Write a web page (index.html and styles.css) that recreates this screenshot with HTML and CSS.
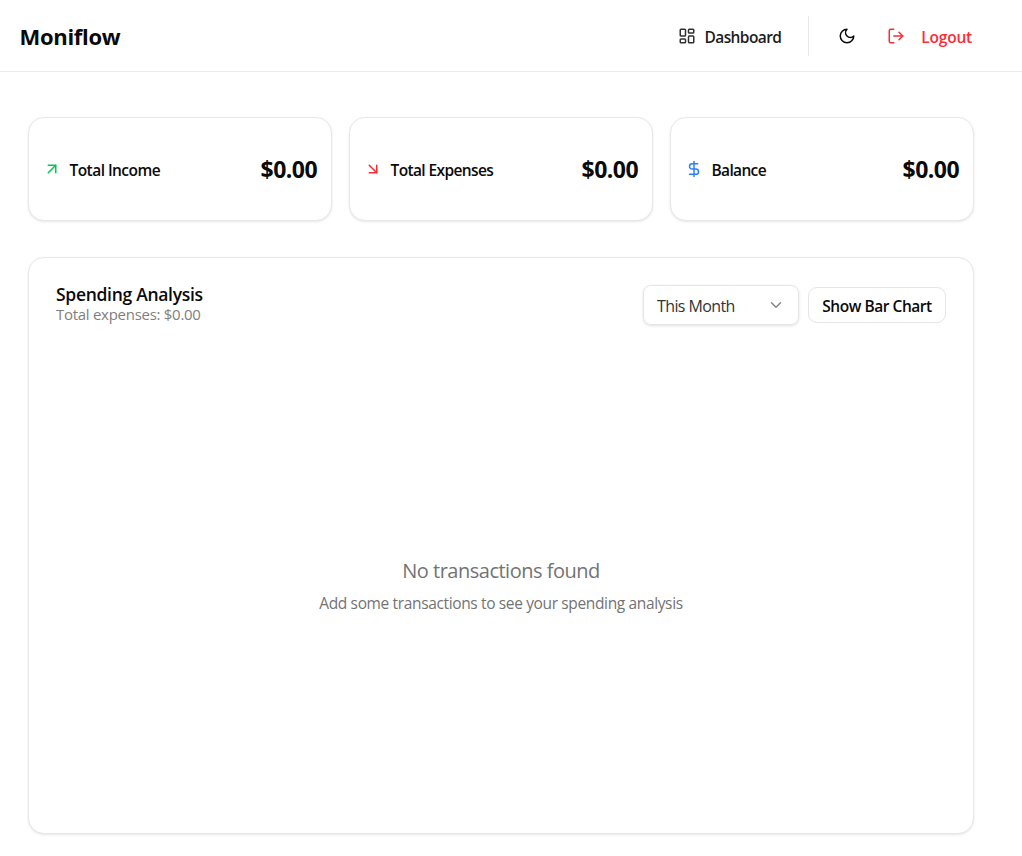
FILE: index.html
```html
<!DOCTYPE html>
<html lang="en">
<head>
<meta charset="utf-8">
<title>Moniflow</title>
<link rel="stylesheet" href="styles.css">
</head>
<body>
<header class="topbar">
  <div class="brand">Moniflow</div>
  <nav class="nav">
    <a class="nav-link">
      <svg class="icon" viewBox="0 0 24 24"><rect width="7" height="9" x="3" y="3" rx="1"/><rect width="7" height="5" x="14" y="3" rx="1"/><rect width="7" height="9" x="14" y="12" rx="1"/><rect width="7" height="5" x="3" y="16" rx="1"/></svg>
      <span class="nav-text">Dashboard</span>
    </a>
    <span class="divider"></span>
    <button class="theme" aria-label="Toggle theme">
      <svg class="icon" viewBox="0 0 24 24"><path d="M12 3a6 6 0 0 0 9 9 9 9 0 1 1-9-9Z"/></svg>
    </button>
    <button class="logout">
      <svg class="icon" viewBox="0 0 24 24"><path d="M9 21H5a2 2 0 0 1-2-2V5a2 2 0 0 1 2-2h4"/><path d="m16 17 5-5-5-5"/><path d="M21 12H9"/></svg>
      <span class="logout-text">Logout</span>
    </button>
  </nav>
</header>
<main class="content">
  <section class="stats">
    <article class="card stat">
      <svg class="icon green" viewBox="0 0 24 24"><path d="M7 7h10v10"/><path d="M7 17 17 7"/></svg>
      <span class="label income">Total Income</span>
      <span class="amount">$0.00</span>
    </article>
    <article class="card stat">
      <svg class="icon red" viewBox="0 0 24 24"><path d="m7 7 10 10"/><path d="M17 7v10H7"/></svg>
      <span class="label expenses">Total Expenses</span>
      <span class="amount">$0.00</span>
    </article>
    <article class="card stat">
      <svg class="icon blue" viewBox="0 0 24 24"><path d="M12 2v20"/><path d="M17 5H9.500a3.500 3.500 0 0 0 0 7h5a3.500 3.500 0 0 1 0 7H6"/></svg>
      <span class="label balance">Balance</span>
      <span class="amount">$0.00</span>
    </article>
  </section>
  <section class="card analysis">
    <div class="analysis-head">
      <div class="titles">
        <h2 class="title">Spending Analysis</h2>
        <p class="subtitle">Total expenses: $0.00</p>
      </div>
      <div class="controls">
        <button class="select"><span class="select-text">This Month</span>
          <svg class="icon chevron" viewBox="0 0 24 24"><path d="m6 9 6 6 6-6"/></svg>
        </button>
        <button class="toggle"><span class="toggle-text">Show Bar Chart</span></button>
      </div>
    </div>
    <div class="empty">
      <p class="empty-title">No transactions found</p>
      <p class="empty-text">Add some transactions to see your spending analysis</p>
    </div>
  </section>
</main>
</body>
</html>
```
FILE: styles.css
```css
* { box-sizing: border-box; margin: 0; padding: 0; }
body {
  width: 1022px;
  height: 856px;
  overflow: hidden;
  background: #fff;
  color: #0a0a0a;
  font-family: "Open Sans", "Noto Sans", sans-serif;
  font-size: 16px;
  line-height: 24px;
}
button { font: inherit; color: inherit; background: none; border: 0; }
span, p, h2, .brand { white-space: nowrap; }
.icon {
  width: 18px;
  height: 18px;
  flex: none;
  display: block;
  fill: none;
  stroke: currentColor;
  stroke-width: 2;
  stroke-linecap: round;
  stroke-linejoin: round;
}
.topbar {
  height: 72px;
  display: flex;
  align-items: center;
  justify-content: space-between;
  padding: 0 50px 0 19.500px;
  border-bottom: 1px solid #ebebeb;
}
.brand { font-size: 22px; font-weight: 700; letter-spacing: -.3px; }
.nav { display: flex; align-items: center; }
.nav-link { display: flex; align-items: center; gap: 8px; color: #1c1c1c; }
.nav-link .icon { color: #303030; }
.nav-text, .logout-text { font-weight: 600; font-size: 15.5px; padding-top: 3px; }
.nav-text { letter-spacing: -.6px; }
.logout-text { letter-spacing: -.2px; }
.divider { width: 1px; height: 40px; background: #e8e8e8; margin: 0 29px 0 27px; }
.logout { display: flex; align-items: center; gap: 16px; margin-left: 31px; color: #fb2c36; }
.content { padding: 45px 48px 0 28px; }
.card {
  border: 1px solid #e8e8e8;
  border-radius: 16px;
  background: #fff;
  box-shadow: 0 1px 3px rgba(0, 0, 0, .08), 0 1px 2px -1px rgba(0, 0, 0, .08);
}
.stats { display: grid; grid-template-columns: repeat(3, 1fr); gap: 17px; }
.stat { height: 104px; display: flex; align-items: center; padding: 0 14px 0 13.500px; }
.label { font-size: 15.5px; font-weight: 600; margin-left: 9px; letter-spacing: -.55px; padding-top: 1px; }
.expenses { letter-spacing: -.62px; }
.balance { letter-spacing: -.65px; }
.amount { font-size: 23px; font-weight: 700; margin-left: auto; letter-spacing: -.55px; }
.green { color: #00c950; }
.red { color: #fb2c36; }
.blue { color: #2b7fff; }
.analysis { height: 577px; margin-top: 36px; padding: 26px 27px; display: flex; flex-direction: column; }
.analysis-head { display: flex; justify-content: space-between; }
.title { font-size: 17.5px; font-weight: 600; line-height: 20px; letter-spacing: -.3px; }
.subtitle { font-size: 15px; line-height: 21px; color: #808080; letter-spacing: -.28px; }
.controls { display: flex; align-items: center; gap: 9px; padding-top: 1px; }
.select {
  width: 156px;
  height: 40px;
  display: flex;
  align-items: center;
  justify-content: space-between;
  padding: 0 13px;
  border: 1px solid #e5e5e5;
  border-radius: 8px;
  box-shadow: 0 1px 3px rgba(0, 0, 0, .12);
  color: #333;
}
.select-text { letter-spacing: -.6px; padding-top: 1px; }
.chevron { color: #858585; }
.toggle { width: 138px; height: 36px; padding-top: 1px; border: 1px solid #e5e5e5; border-radius: 9px; font-weight: 600; font-size: 15.5px; letter-spacing: -.46px; }
.empty { flex: 1; text-align: center; padding-top: 232px; color: #737373; }
.empty-title { font-size: 20px; line-height: 28px; letter-spacing: -.5px; }
.empty-text { font-size: 15.5px; line-height: 24px; margin-top: 6px; letter-spacing: -.36px; }
```
